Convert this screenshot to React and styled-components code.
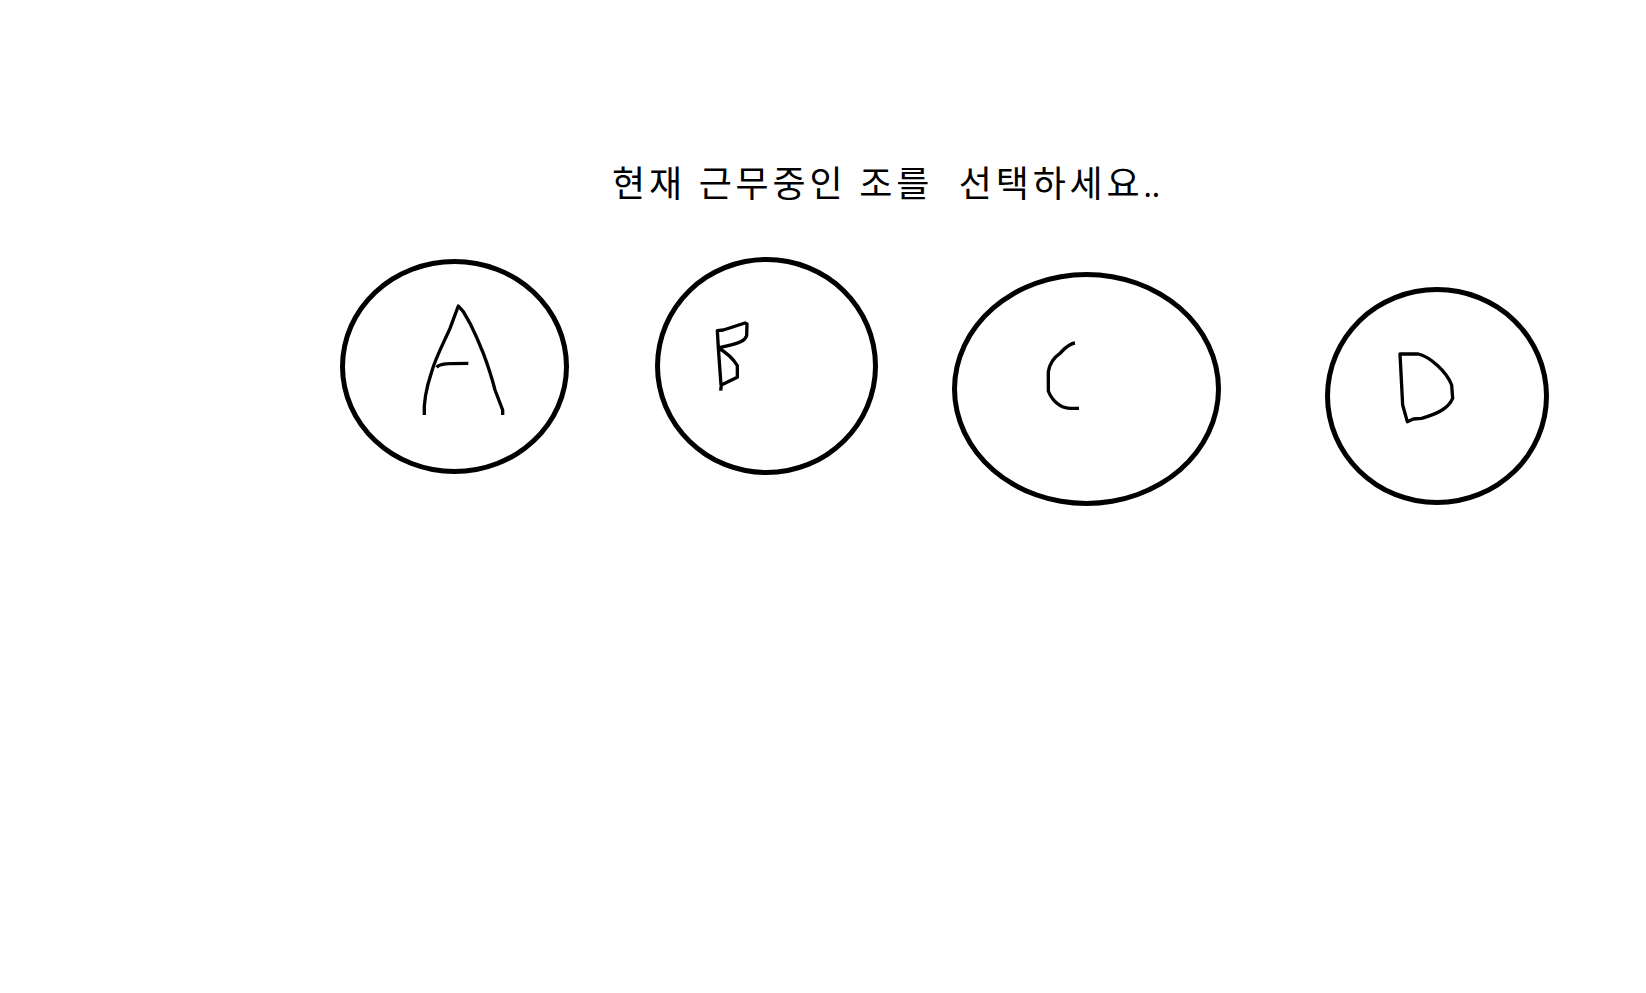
import React from "react";
import styled, { createGlobalStyle } from "styled-components";

const GlobalStyle = createGlobalStyle`
  html, body {
    margin: 0;
    padding: 0;
    background: #ffffff;
  }
`;

// hand drawn marks, in 3x reference pixels
const TEAMS = [
  {
    id: "A",
    width: 229,
    height: 215,
    top: 2,
    gap: 0,
    viewBox: "45 42 657 615",
    marks: [
      "M283 495 C280 450 290 410 305 365 C318 320 345 270 360 235 L385 168 L400 185 L420 220 C435 250 448 280 460 310 C475 350 485 380 495 420 L518 480 L518 495",
      "M320 352 C330 340 350 340 415 340",
    ],
  },
  {
    id: "B",
    width: 223,
    height: 218,
    top: 0,
    gap: 86,
    viewBox: "30 39 639 624",
    marks: [
      "M212 425 L214 408 L262 385 L262 350 C250 330 232 312 205 297 L213 408",
      "M205 297 L202 245 L220 243 L285 222 L291 225 L290 260 C285 275 275 282 205 297",
    ],
  },
  {
    id: "C",
    width: 269,
    height: 234,
    top: 15,
    gap: 74,
    viewBox: "36 36 777 672",
    marks: [
      "M390 234 C370 236 355 255 345 265 C330 275 315 290 310 320 L310 378 C320 405 345 430 375 430 L402 430",
    ],
  },
  {
    id: "D",
    width: 224,
    height: 218,
    top: 30,
    gap: 104,
    viewBox: "45 36 642 624",
    marks: [
      "M255 222 L310 222 C345 230 395 275 410 315 L413 355 C400 385 370 400 320 415 L295 417 L277 425 L263 375 Z",
    ],
  },
];

const Page = styled.div`
  width: 1646px;
  height: 993px;
  background: #ffffff;
  overflow: hidden;
`;

const Title = styled.h1`
  margin: 0;
  padding: 155px 0 0 612px;
  font-family: "Noto Sans CJK KR", "Liberation Sans", sans-serif;
  font-size: 36px;
  font-weight: 400;
  letter-spacing: 3.8px;
  word-spacing: 1px;
  line-height: 52px;
  white-space: pre;
  color: #000000;
`;

const Dots = styled.span`
  font-size: 30px;
  letter-spacing: 0;
  line-height: 0;
`;

const TeamRow = styled.div`
  display: flex;
  align-items: flex-start;
  padding: 50px 0 0 340px;
`;

const TeamCircle = styled.button`
  display: block;
  flex: none;
  box-sizing: border-box;
  width: ${(props) => props.$width}px;
  height: ${(props) => props.$height}px;
  margin-top: ${(props) => props.$top}px;
  margin-left: ${(props) => props.$gap}px;
  padding: 0;
  background: #ffffff;
  border: 5px solid #000000;
  border-radius: 50%;
  cursor: pointer;
`;

const Scribble = styled.svg`
  display: block;
  width: 100%;
  height: 100%;
  fill: none;
  stroke: #000000;
  stroke-width: 10;
  stroke-linejoin: round;
`;

const App = () => {
  return (
    <Page>
      <GlobalStyle />
      <Title>
        {"현재 근무중인 조를  선택하세요"}
        <Dots>..</Dots>
      </Title>
      <TeamRow>
        {TEAMS.map((team) => (
          <TeamCircle
            key={team.id}
            aria-label={team.id}
            $width={team.width}
            $height={team.height}
            $top={team.top}
            $gap={team.gap}
          >
            <Scribble viewBox={team.viewBox}>
              {team.marks.map((mark) => (
                <path key={mark} d={mark} />
              ))}
            </Scribble>
          </TeamCircle>
        ))}
      </TeamRow>
    </Page>
  );
};

export default App;
